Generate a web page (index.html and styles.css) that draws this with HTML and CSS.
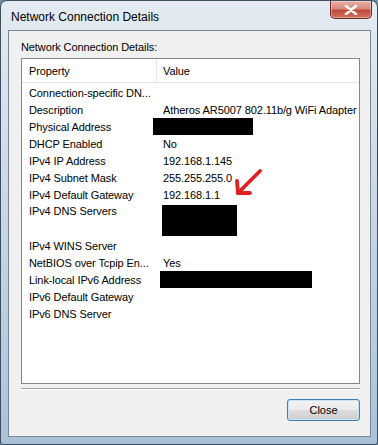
FILE: index.html
```html
<!DOCTYPE html>
<html lang="en">
<head>
  <meta charset="UTF-8" />
  <title>Network Connection Details</title>
  <link rel="stylesheet" href="styles.css">
</head>
<body>
  <div class="window">
    <div class="titlebar">
      <span class="title">Network Connection Details</span>
      <button class="close-x" aria-label="Close">
        <svg viewBox="0 0 14 10" width="14" height="10">
          <path d="M2 1l10 8M12 1L2 9" stroke="#fff" stroke-width="2.6" stroke-linecap="round"/>
        </svg>
      </button>
    </div>

    <div class="client">
      <div class="label">Network Connection Details:</div>

      <div class="listview">
        <div class="list-header">
          <div class="col col-prop">Property</div>
          <div class="col col-val">Value</div>
        </div>

        <div class="row"><span class="prop">Connection-specific DN...</span><span class="val"></span></div>
        <div class="row"><span class="prop">Description</span><span class="val">Atheros AR5007 802.11b/g WiFi Adapter</span></div>
        <div class="row"><span class="prop">Physical Address</span><span class="val"><span class="redact redact-mac"></span></span></div>
        <div class="row"><span class="prop">DHCP Enabled</span><span class="val">No</span></div>
        <div class="row"><span class="prop">IPv4 IP Address</span><span class="val">192.168.1.145</span></div>
        <div class="row"><span class="prop">IPv4 Subnet Mask</span><span class="val">255.255.255.0</span></div>
        <div class="row"><span class="prop">IPv4 Default Gateway</span><span class="val">192.168.1.1</span></div>
        <div class="row row-tall"><span class="prop">IPv4 DNS Servers</span><span class="val"><span class="redact redact-dns"></span></span></div>
        <div class="row"><span class="prop">IPv4 WINS Server</span><span class="val"></span></div>
        <div class="row"><span class="prop">NetBIOS over Tcpip En...</span><span class="val">Yes</span></div>
        <div class="row"><span class="prop">Link-local IPv6 Address</span><span class="val"><span class="redact redact-v6"></span></span></div>
        <div class="row"><span class="prop">IPv6 Default Gateway</span><span class="val"></span></div>
        <div class="row"><span class="prop">IPv6 DNS Server</span><span class="val"></span></div>

        <!-- red arrow drawn on top of the screenshot -->
        <svg class="arrow" viewBox="0 0 30 28" width="30" height="28">
          <path d="M27 2L5 24" stroke="#e11f1f" stroke-width="3.8" stroke-linecap="round"/>
          <path d="M4 12L5 24L17 24" fill="none" stroke="#e11f1f" stroke-width="3.8" stroke-linecap="round" stroke-linejoin="round"/>
        </svg>
      </div>

      <div class="separator"></div>

      <div class="buttons">
        <button class="btn">Close</button>
      </div>
    </div>
  </div>
</body>
</html>
```

FILE: styles.css
```css
* { box-sizing: border-box; }
body {
  margin: 0;
  font-family: 'Liberation Sans', Arial, sans-serif;
  font-size: 11px;
  color: #000;
  background: #6f8aa3;
}
.window {
  width: 378px;
  height: 445px;
  border: 1px solid #3f4e5e;
  border-radius: 7px 7px 3px 3px;
  background: linear-gradient(180deg, #e4ebf2 0%, #cfdce8 35%, #b8cde0 75%, #a9c2da 100%);
  display: flex;
  flex-direction: column;
}
.titlebar {
  height: 29px;
  display: flex;
  justify-content: space-between;
  align-items: flex-start;
  padding-left: 10px;
}
.title {
  font-size: 12px;
  margin-top: 9px;
}
.close-x {
  width: 42px;
  height: 18px;
  margin-right: 5px;
  padding: 0;
  border: 1px solid #6a2a22;
  border-top: none;
  border-radius: 0 0 5px 5px;
  background: linear-gradient(180deg, #e9b0a6 0%, #d9897c 45%, #c24a3b 55%, #d2715f 100%);
  box-shadow: inset 0 0 0 1px rgba(255,255,255,0.35);
  display: flex;
  align-items: center;
  justify-content: center;
}
.client {
  flex: 1;
  margin: 0 6px 7px 7px;
  border: 1px solid #7a8795;
  background: #f0f0f0;
  display: flex;
  flex-direction: column;
  padding: 9px 10px 15px 12px;
}
.label {
  height: 14px;
  line-height: 14px;
  margin-bottom: 4px;
  letter-spacing: -0.1px;
}
.listview {
  flex: 1;
  background: #fff;
  border: 1px solid #828790;
  position: relative;
  letter-spacing: -0.1px;
}
.list-header {
  height: 24px;
  display: flex;
  border-bottom: 1px solid #e5e5e5;
}
.col {
  display: flex;
  align-items: center;
}
.col-prop {
  width: 135px;
  padding-left: 7px;
  border-right: 1px solid #e5e5e5;
}
.col-val {
  padding-left: 6px;
}
.list-header + .row { margin-top: 1px; }
.row {
  height: 17px;
  display: grid;
  grid-template-columns: 136px 1fr;
  align-items: center;
  white-space: nowrap;
}
.row-tall {
  height: 34px;
  align-items: start;
}
.row-tall .prop { padding-top: 2px; }
.prop { padding-left: 7px; }
.val { padding-left: 5px; display: flex; }
.redact {
  display: block;
  background: #000;
}
.redact-mac { width: 100px; height: 17px; margin-left: -10px; }
.redact-dns { width: 75px; height: 31px; margin-left: -1px; margin-top: 2px; }
.redact-v6 { width: 152px; height: 17px; margin-left: -3px; margin-top: -1px; }
.arrow {
  position: absolute;
  left: 211px;
  top: 110px;
}
.separator {
  margin-top: 4px;
  height: 2px;
  border-top: 1px solid #a0a0a0;
  border-bottom: 1px solid #fff;
}
.buttons {
  margin-top: 9px;
  display: flex;
  justify-content: flex-end;
}
.btn {
  width: 73px;
  height: 22px;
  font-family: inherit;
  font-size: 11px;
  color: #000;
  border: 1px solid #3c7fb1;
  border-radius: 3px;
  background: linear-gradient(180deg, #f2f2f2 0%, #ebebeb 50%, #dddddd 50%, #cfcfcf 100%);
  box-shadow: inset 0 0 0 1px #c6e4f5;
  padding: 0;
}
```
